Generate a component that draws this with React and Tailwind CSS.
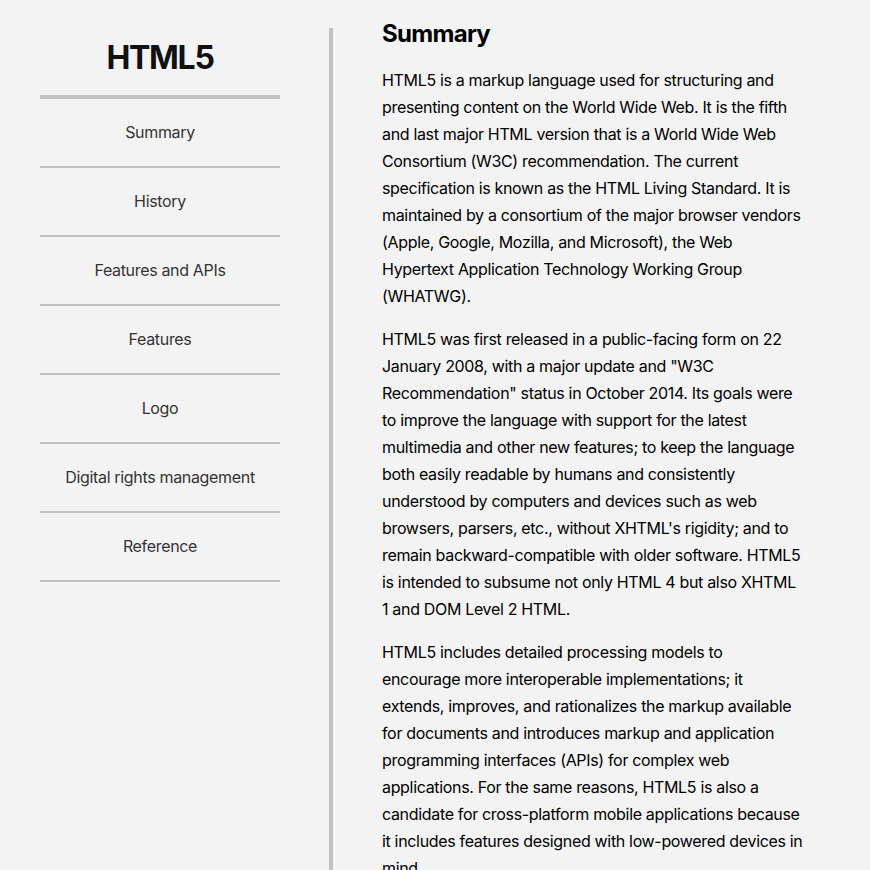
import React from "react";

const items = [
  "Summary",
  "History",
  "Features and APIs",
  "Features",
  "Logo",
  "Digital rights management",
  "Reference",
];

export default function App() {
  return (
    <div
      className="min-h-screen w-full bg-[#f3f3f3] text-black tracking-[-0.33px]"
      style={{ fontFamily: "Inter, 'Noto Sans', sans-serif" }}
    >
      <div className="flex">
        <nav className="ml-[40px] w-[240px] shrink-0 pt-[38px]">
          <h1 className="text-center text-[32px] font-bold leading-[40px] tracking-[-1.3px] text-[#111]">HTML5</h1>
          <ul className="mt-[17px] border-t-[4px] border-[#c2c2c2]">
            {items.map((it) => (
              <li
                key={it}
                className="border-b-2 border-[#c2c2c2] py-[21px] text-center text-[16px] leading-[25px] text-[#333]"
              >
                {it}
              </li>
            ))}
          </ul>
        </nav>
        <div className="ml-[49px] mt-[28px] w-[4px] shrink-0 self-stretch bg-[#c2c2c2]" />
        <main className="ml-[49px] w-[422px] pt-[20px]">
          <h2 className="mb-[19px] text-[24px] font-bold leading-[28px] tracking-[-0.7px]">Summary</h2>
          <p className="mb-4 text-[16px] leading-[27px]">
            HTML5 is a markup language used for structuring and presenting content on the World Wide Web. It is the fifth and last major HTML version that is a World Wide Web Consortium (W3C) recommendation. The current specification is known as the HTML Living Standard. It is maintained by a consortium of the major browser vendors (Apple, Google, Mozilla, and Microsoft), the Web Hypertext Application Technology Working Group (WHATWG).
          </p>
          <p className="mb-4 text-[16px] leading-[27px]">
            HTML5 was first released in a public-facing form on 22 January 2008, with a major update and "W3C Recommendation" status in October 2014. Its goals were to improve the language with support for the latest multimedia and other new features; to keep the language both easily readable by humans and consistently understood by computers and devices such as web browsers, parsers, etc., without XHTML's rigidity; and to remain backward-compatible with older software. HTML5 is intended to subsume not only HTML 4 but also XHTML 1 and DOM Level 2 HTML.
          </p>
          <p className="mb-4 text-[16px] leading-[27px]">
            HTML5 includes detailed processing models to encourage more interoperable implementations; it extends, improves, and rationalizes the markup available for documents and introduces markup and application programming interfaces (APIs) for complex web applications. For the same reasons, HTML5 is also a candidate for cross-platform mobile applications because it includes features designed with low-powered devices in mind.
          </p>
        </main>
      </div>
    </div>
  );
}
